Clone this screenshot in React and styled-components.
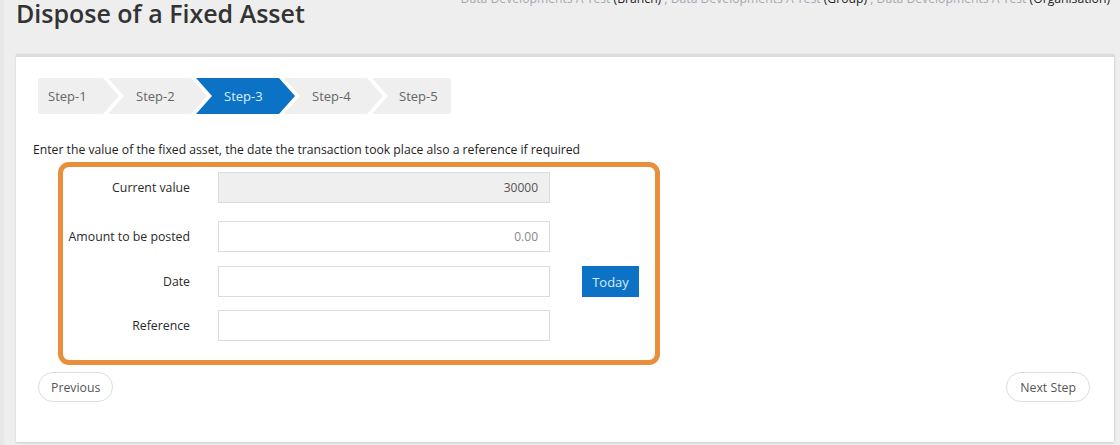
import React from "react";
import styled, { createGlobalStyle, css } from "styled-components";

const Global = createGlobalStyle`
  html, body { margin: 0; padding: 0; }
  body {
    background: #efeeef;
    font-family: "Open Sans", "Noto Sans", "Liberation Sans", sans-serif;
    color: #333;
    width: 1120px;
    height: 445px;
    overflow: hidden;
  }
  * { box-sizing: border-box; }
`;

const Page = styled.div`
  display: flex;
  flex-direction: column;
  height: 445px;
  border-left: 4px solid #e7e6e8;
`;

const Header = styled.header`
  display: flex;
  justify-content: space-between;
  align-items: flex-start;
  height: 54px;
  padding: 0 10px 0 12px;
`;

const Title = styled.h1`
  margin: 1px 0 0;
  font-size: 25px;
  line-height: 24px;
  font-weight: 600;
  color: #333;
`;

const Crumbs = styled.div`
  margin-top: -9px;
  font-size: 12.2px;
  line-height: 16px;
  color: #a3a9b0;
  white-space: nowrap;
`;

const CrumbType = styled.span`
  color: #222;
`;

const Panel = styled.main`
  flex: 1;
  margin: 0 6px 3px 12px;
  background: #fff;
  border-top: 3px solid #dcdce0;
  box-shadow: 0 1px 2px rgba(0, 0, 0, 0.12), 1px 0 2px rgba(0, 0, 0, 0.06);
  padding: 21px 24px 0 17px;
  display: flex;
  flex-direction: column;
`;

const Steps = styled.nav`
  display: flex;
  height: 36px;
  margin-left: 5px;
`;

const Step = styled.div`
  height: 36px;
  display: flex;
  align-items: center;
  font-size: 13px;
  color: ${(p) => (p.$active ? "#dcefff" : "#666")};
  background: ${(p) => (p.$active ? "#0b72c6" : "#efefef")};
  width: 99px;
  padding-left: 28px;
  margin-left: -11px;
  clip-path: polygon(0 0, calc(100% - 16px) 0, 100% 50%, calc(100% - 16px) 100%, 0 100%, 16px 50%);
  ${(p) =>
    p.$first &&
    css`
      width: 81px;
      margin-left: 0;
      padding-left: 10px;
      border-radius: 3px 0 0 3px;
      clip-path: polygon(0 0, calc(100% - 16px) 0, 100% 50%, calc(100% - 16px) 100%, 0 100%);
    `}
  ${(p) =>
    p.$last &&
    css`
      width: 79px;
      padding-left: 27px;
      border-radius: 0 3px 3px 0;
      clip-path: polygon(0 0, 100% 0, 100% 100%, 0 100%, 16px 50%);
    `}
`;

const Intro = styled.p`
  margin: 28px 0 0;
  font-size: 12.2px;
  line-height: 16px;
  color: #1e1e1e;
`;

const FormBox = styled.section`
  margin: 4px 0 0 25px;
  width: 602px;
  border: 5px solid #e88f3c;
  border-radius: 11px;
  padding: 5px 0 19px 0;
  display: flex;
  flex-direction: column;
`;

const Row = styled.div`
  display: flex;
  align-items: center;
  margin-top: ${(p) => p.$top || 0}px;
`;

const Label = styled.label`
  width: 127px;
  text-align: right;
  font-size: 12.3px;
  color: #2a2a2a;
  margin-right: 28px;
  white-space: nowrap;
`;

const Input = styled.div`
  width: 332px;
  height: 31px;
  border: 1px solid #dcdcdc;
  background: ${(p) => (p.$readOnly ? "#efefef" : "#fff")};
  color: ${(p) => (p.$muted ? "#888" : "#555")};
  font-size: 12px;
  display: flex;
  align-items: center;
  justify-content: flex-end;
  padding: 0 11px;
`;

const TodayButton = styled.button`
  margin-left: 32px;
  width: 57px;
  height: 31px;
  border: none;
  border-radius: 0;
  background: #0b72c6;
  color: #d8ecfb;
  font-family: inherit;
  font-size: 13px;
  padding: 0;
`;

const Actions = styled.div`
  display: flex;
  justify-content: space-between;
  margin: 7px 0 0 5px;
`;

const PillButton = styled.button`
  height: 30px;
  border: 1px solid #dedede;
  border-radius: 15px;
  background: #fff;
  color: #555;
  font-family: inherit;
  font-size: 12.3px;
  padding: 0 ${(p) => p.$pad || 12}px;
`;

export default function App() {
  const steps = ["Step-1", "Step-2", "Step-3", "Step-4", "Step-5"];
  return (
    <>
      <Global />
      <Page>
        <Header>
          <Title>Dispose of a Fixed Asset</Title>
          <Crumbs>
            Data Developments A Test <CrumbType>(Branch)</CrumbType> , Data Developments A Test{" "}
            <CrumbType>(Group)</CrumbType> , Data Developments A Test <CrumbType>(Organisation)</CrumbType>
          </Crumbs>
        </Header>
        <Panel>
          <Steps>
            {steps.map((s, i) => (
              <Step key={s} $first={i === 0} $last={i === steps.length - 1} $active={i === 2}>
                {s}
              </Step>
            ))}
          </Steps>
          <Intro>
            Enter the value of the fixed asset, the date the transaction took place also a reference if required
          </Intro>
          <FormBox>
            <Row>
              <Label>Current value</Label>
              <Input $readOnly>30000</Input>
            </Row>
            <Row $top={18}>
              <Label>Amount to be posted</Label>
              <Input $muted>0.00</Input>
            </Row>
            <Row $top={14}>
              <Label>Date</Label>
              <Input />
              <TodayButton>Today</TodayButton>
            </Row>
            <Row $top={13}>
              <Label>Reference</Label>
              <Input />
            </Row>
          </FormBox>
          <Actions>
            <PillButton $pad={12}>Previous</PillButton>
            <PillButton $pad={13}>Next Step</PillButton>
          </Actions>
        </Panel>
      </Page>
    </>
  );
}
